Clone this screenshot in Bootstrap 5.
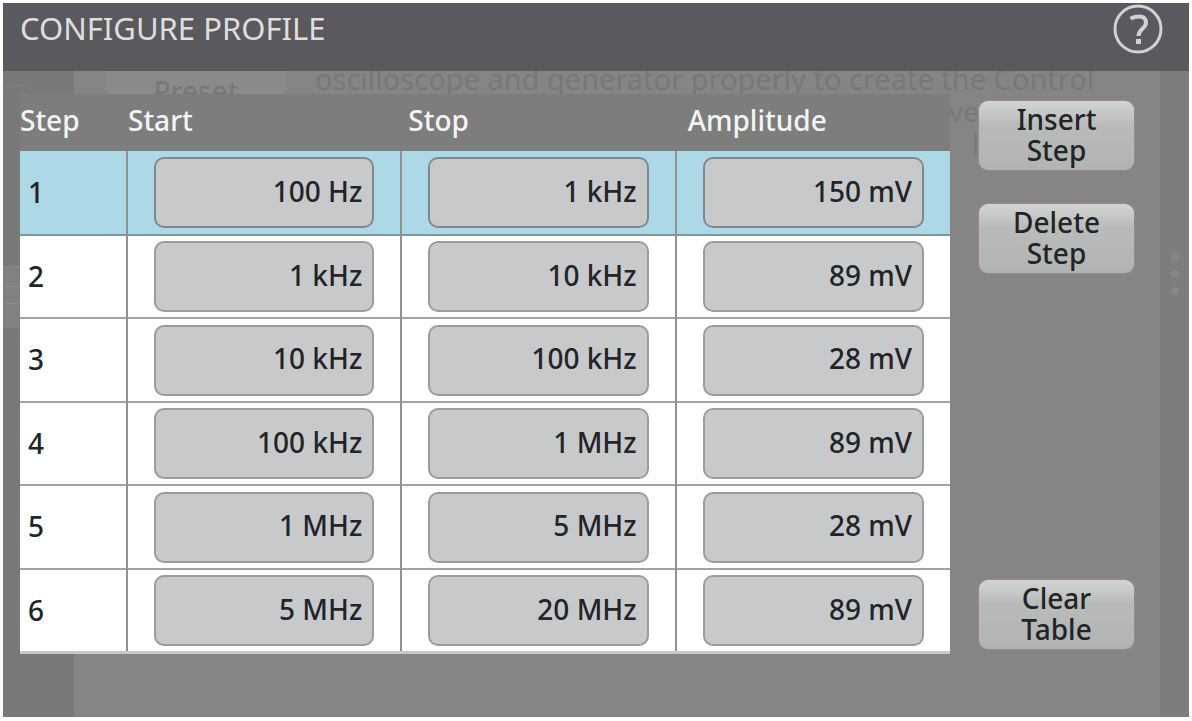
<!DOCTYPE html>
<html lang="en">
<head>
<meta charset="utf-8">
<meta name="viewport" content="width=device-width, initial-scale=1">
<title>Configure Profile</title>
<link href="https://cdn.jsdelivr.net/npm/bootstrap@5.3.0/dist/css/bootstrap.min.css" rel="stylesheet">
<style>
  body { background: #fff; font-family: "Noto Sans", "Open Sans", sans-serif; font-size: 28px; line-height: 32px; color: #222427; padding: 3px 3px 4px; }
  .screen { background: #868484; }
  .title-bar { background: #5a595e; color: #dededf; height: 68px; padding: 0 26px 0 17px; }
  .title-bar h1 { font-size: 31px; line-height: 50px; font-weight: 400; }
  .help-btn { width: 50px; height: 52px; color: #d2d2d4; }

  /* dimmed page behind the dialog */
  .backdrop-page { z-index: 0; color: #7a7777; }
  .rail-left { width: 71px; background: #7a7979; }
  .rail-right { width: 29px; background: #7e7c7d; }
  .ghost-menu { top: 195px; height: 62px; width: 17px; background: #828181; border-top: 1px solid #8b8a8a; }
  .ghost-menu::after { content: ""; display: block; margin-top: 19px; height: 18px; border-top: 1px solid #8b8a8a; border-bottom: 1px solid #8b8a8a; }
  .ghost-preset { left: 104px; width: 178px; height: 60px; background: #8b8989; padding-top: 4px; font-weight: 500; }
  .ghost-text { left: 312px; top: -8px; font-size: 29px; font-weight: 400; white-space: nowrap; }
  .ghost-tail { right: 210px; top: 24px; }

  .dialog-body { z-index: 1; padding: 23px 55px 63px 17px; gap: 29px; }
  .steps { table-layout: fixed; border-collapse: collapse; }
  .steps .col-step { width: 107px; }
  .steps th { height: 57px; padding: 0 0 6px 7px; font-weight: 500; color: #f4f4f4; background: #7e7d7d; }
  .steps thead th:first-child { padding-left: 0; }
  .steps thead th:nth-child(2) { padding-left: 1px; }
  .steps thead th:last-child { padding-left: 12px; }
  .steps tbody th { color: inherit; background: none; padding: 0 0 2px 8px; }
  .steps tbody tr { height: 84px; background: #fff; border-bottom: 2px solid #a2a2a2; }
  .steps tbody tr:nth-child(even) { height: 83px; }
  .steps tbody tr.selected { background: #add8e6; border-bottom-color: #7f979f; }
  .steps tbody tr:last-child { border-bottom: 3px solid #c8c8c5; }
  .steps td { padding: 5px 26px; border-left: 2px solid #919191; }
  .steps input { height: 71px; padding: 0 10px 4px; border: 2px solid #9b9c9e; border-radius: 10px; background: #c8c9cb; color: #222427; font-size: 28px; font-weight: 500; text-align: right; }
  .steps .selected input { border-color: #80898f; }

  .side-buttons { width: 155px; padding: 7px 0 5px; gap: 34px; }
  .side-buttons .btn { height: 69px; padding: 0 28px 2px; border: 0; border-radius: 9px; font-size: 28px; font-weight: 500; line-height: 31px; color: #222427; background: linear-gradient(#d3d4d4, #b9bbbb 35%, #b1b4b3); box-shadow: 0 0 2px #a5a6a6; }
</style>
</head>
<body class="d-flex flex-column min-vh-100">
<div class="screen d-flex flex-column flex-grow-1">
  <header class="title-bar d-flex justify-content-between align-items-start">
    <h1 class="m-0">CONFIGURE PROFILE</h1>
    <button type="button" class="help-btn btn p-0 border-0 d-flex align-items-center" aria-label="Help">
      <svg width="50" height="50" viewBox="0 0 50 50" fill="none" stroke="currentColor">
        <circle cx="25" cy="25" r="23" stroke-width="3"/>
        <path d="M17.500 14.500 C26 10.500 33 12.500 33 18.500 C33 25 25.500 24.500 25.500 32" stroke-width="4"/>
        <path d="M25.500 35 V40" stroke-width="5"/>
      </svg>
    </button>
  </header>
  <div class="position-relative flex-grow-1">
    <div class="backdrop-page position-absolute top-0 start-0 w-100 h-100 overflow-hidden d-flex justify-content-between" aria-hidden="true">
      <div class="rail-left">
        <svg class="d-block" width="36" height="24" viewBox="0 0 36 24" fill="none" stroke="#75836f" stroke-width="2"><path d="M0 18 Q18 10 33 20"/></svg>
      </div>
      <div class="ghost-menu position-absolute start-0"></div>
      <div class="ghost-preset position-absolute top-0 text-center">Preset</div>
      <div class="ghost-text position-absolute">oscilloscope and generator properly to create the Control</div>
      <div class="ghost-tail position-absolute text-end">ve<br>l</div>
      <div class="rail-right d-flex flex-column align-items-center">
        <svg class="d-block" width="8" height="230" viewBox="0 0 8 230" fill="#888687"><circle cx="4" cy="186" r="4"/><circle cx="4" cy="203" r="4"/><circle cx="4" cy="220" r="4"/></svg>
      </div>
    </div>
    <main class="dialog-body position-relative d-flex">
      <div class="flex-grow-1">
        <table class="steps w-100">
          <colgroup><col class="col-step"><col><col><col></colgroup>
          <thead><tr><th scope="col">Step</th><th scope="col">Start</th><th scope="col">Stop</th><th scope="col">Amplitude</th></tr></thead>
          <tbody>
            <tr class="selected"><th scope="row">1</th><td><input class="w-100 d-block" type="text" aria-label="Step 1 start" value="100 Hz"></td><td><input class="w-100 d-block" type="text" aria-label="Step 1 stop" value="1 kHz"></td><td><input class="w-100 d-block" type="text" aria-label="Step 1 amplitude" value="150 mV"></td></tr>
            <tr><th scope="row">2</th><td><input class="w-100 d-block" type="text" aria-label="Step 2 start" value="1 kHz"></td><td><input class="w-100 d-block" type="text" aria-label="Step 2 stop" value="10 kHz"></td><td><input class="w-100 d-block" type="text" aria-label="Step 2 amplitude" value="89 mV"></td></tr>
            <tr><th scope="row">3</th><td><input class="w-100 d-block" type="text" aria-label="Step 3 start" value="10 kHz"></td><td><input class="w-100 d-block" type="text" aria-label="Step 3 stop" value="100 kHz"></td><td><input class="w-100 d-block" type="text" aria-label="Step 3 amplitude" value="28 mV"></td></tr>
            <tr><th scope="row">4</th><td><input class="w-100 d-block" type="text" aria-label="Step 4 start" value="100 kHz"></td><td><input class="w-100 d-block" type="text" aria-label="Step 4 stop" value="1 MHz"></td><td><input class="w-100 d-block" type="text" aria-label="Step 4 amplitude" value="89 mV"></td></tr>
            <tr><th scope="row">5</th><td><input class="w-100 d-block" type="text" aria-label="Step 5 start" value="1 MHz"></td><td><input class="w-100 d-block" type="text" aria-label="Step 5 stop" value="5 MHz"></td><td><input class="w-100 d-block" type="text" aria-label="Step 5 amplitude" value="28 mV"></td></tr>
            <tr><th scope="row">6</th><td><input class="w-100 d-block" type="text" aria-label="Step 6 start" value="5 MHz"></td><td><input class="w-100 d-block" type="text" aria-label="Step 6 stop" value="20 MHz"></td><td><input class="w-100 d-block" type="text" aria-label="Step 6 amplitude" value="89 mV"></td></tr>
          </tbody>
        </table>
      </div>
      <div class="side-buttons d-flex flex-column flex-shrink-0">
        <button type="button" class="btn">Insert Step</button>
        <button type="button" class="btn">Delete Step</button>
        <button type="button" class="btn mt-auto">Clear Table</button>
      </div>
    </main>
  </div>
</div>
<script src="https://cdn.jsdelivr.net/npm/bootstrap@5.3.0/dist/js/bootstrap.bundle.min.js"></script>
</body>
</html>
